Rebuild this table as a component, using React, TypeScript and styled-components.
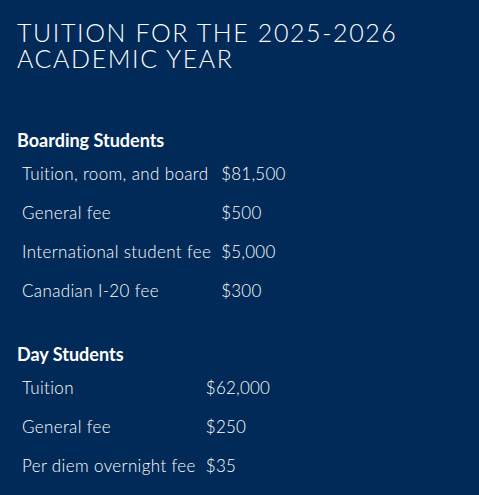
import * as React from "react";
import styled, { createGlobalStyle } from "styled-components";

const GlobalStyle = createGlobalStyle`
  html, body {
    margin: 0;
    padding: 0;
    background: #012a58;
  }
`;

const Page = styled.div`
  min-height: 495px;
  box-sizing: border-box;
  padding: 19px 17px 10px;
  background: #012a58;
  color: #ffffff;
  font-family: Lato, "Open Sans", sans-serif;
`;

const Title = styled.h2`
  margin: 0 0 58px;
  font-size: 25px;
  line-height: 26px;
  font-weight: 300;
  letter-spacing: 1.6px;
  text-transform: uppercase;
`;

const Section = styled.section`
  & + & {
    margin-top: 33px;
  }
`;

const Heading = styled.h3`
  margin: 0 0 3px;
  font-size: 18px;
  line-height: 22px;
  font-weight: 700;
`;

const Table = styled.table`
  border-collapse: collapse;
`;

const Cell = styled.td<{ $label?: boolean }>`
  padding: 10px 5px;
  font-size: 17px;
  line-height: 19px;
  font-weight: 300;
  letter-spacing: ${(p) => (p.$label ? "0.36px" : "0.2px")};
  white-space: nowrap;
`;

type Fee = { label: string; amount: string };

const boarding: Fee[] = [
  { label: "Tuition, room, and board", amount: "$81,500" },
  { label: "General fee", amount: "$500" },
  { label: "International student fee", amount: "$5,000" },
  { label: "Canadian I-20 fee", amount: "$300" },
];

const day: Fee[] = [
  { label: "Tuition", amount: "$62,000" },
  { label: "General fee", amount: "$250" },
  { label: "Per diem overnight fee", amount: "$35" },
];

const FeeTable: React.FunctionComponent<{ title: string; fees: Fee[] }> = ({
  title,
  fees,
}) => (
  <Section>
    <Heading>{title}</Heading>
    <Table>
      <tbody>
        {fees.map((fee) => (
          <tr key={fee.label}>
            <Cell $label>{fee.label}</Cell>
            <Cell>{fee.amount}</Cell>
          </tr>
        ))}
      </tbody>
    </Table>
  </Section>
);

const App: React.FunctionComponent = () => (
  <>
    <GlobalStyle />
    <Page>
      <Title>
        Tuition for the 2025-2026
        <br />
        academic year
      </Title>
      <FeeTable title="Boarding Students" fees={boarding} />
      <FeeTable title="Day Students" fees={day} />
    </Page>
  </>
);

export default App;
